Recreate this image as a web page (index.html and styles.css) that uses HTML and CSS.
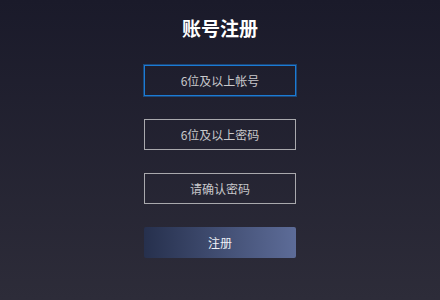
FILE: index.html
```html
<!DOCTYPE html>
<html lang="zh-CN">
<head>
    <meta charset="UTF-8">
    <meta name="viewport" content="width=device-width, initial-scale=1.0">
    <title>账号注册</title>
    <link rel="stylesheet" href="styles.css">
</head>
<body>
    <div class="register">
        <h2 class="title">账号注册</h2>
        <input class="field field-active" type="text" placeholder="6位及以上帐号">
        <input class="field" type="password" placeholder="6位及以上密码">
        <input class="field" type="password" placeholder="请确认密码">
        <button class="submit-btn">注册</button>
    </div>
</body>
</html>
```

FILE: styles.css
```css
html, body {
    height: 100%;
}
body {
    margin: 0;
    font-family: "Noto Sans CJK SC", "Noto Sans", sans-serif;
    background: linear-gradient(180deg, #1a1a2a 0%, #2d2c39 100%);
}
.register {
    display: flex;
    flex-direction: column;
    align-items: center;
}
.title {
    margin: 14px 0 23px;
    font-size: 19px;
    line-height: 28px;
    font-weight: bold;
    color: #fff;
}
.field {
    box-sizing: border-box;
    width: 152px;
    height: 31px;
    margin-bottom: 23px;
    padding: 0;
    border: 1px solid #a9a9ad;
    background: transparent;
    color: #fff;
    font-family: inherit;
    font-size: 12px;
    text-align: center;
    outline: none;
}
.field::placeholder {
    color: #c9c9cc;
}
.field-active {
    border: 1px solid #1b7bd4;
    box-shadow: 0 0 0 1px rgba(27, 123, 212, 0.45);
}
.submit-btn {
    width: 152px;
    height: 31px;
    border: none;
    border-radius: 2px;
    background: linear-gradient(90deg, #26304d 0%, #5d6c98 100%);
    color: #eef0f6;
    font-family: inherit;
    font-size: 12px;
    cursor: pointer;
}
```
